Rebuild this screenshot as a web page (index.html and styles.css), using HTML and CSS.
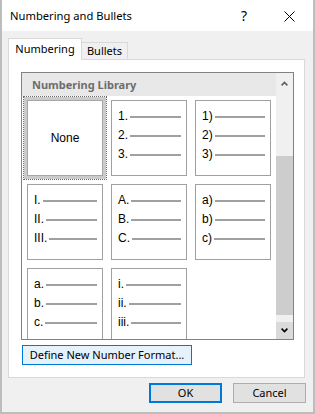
FILE: index.html
```html
<!DOCTYPE html>
<html>
<head>
<meta charset="utf-8">
<link rel="stylesheet" href="styles.css">
</head>
<body>
<div class="window">
  <div class="titlebar">
    <span class="title">Numbering and Bullets</span>
    <span class="help">?</span>
    <span class="close"><svg width="11" height="11" viewBox="0 0 11 11"><path d="M0.5 0.5 L10.5 10.5 M10.5 0.5 L0.5 10.5" stroke="#000" stroke-width="1" fill="none"/></svg></span>
  </div>
  <div class="content">
    <div class="tabs">
      <div class="tab active">Numbering</div>
      <div class="tab">Bullets</div>
    </div>
    <div class="panel">
      <div class="listbox">
        <div class="list-main">
          <div class="lib-header">Numbering Library</div>
          <div class="grid">
            <div class="slot"><div class="cell none selected">None</div></div>
            <div class="slot"><div class="cell">
              <div class="row"><span>1.</span><i></i></div>
              <div class="row"><span>2.</span><i></i></div>
              <div class="row"><span>3.</span><i></i></div>
            </div></div>
            <div class="slot"><div class="cell">
              <div class="row"><span>1)</span><i></i></div>
              <div class="row"><span>2)</span><i></i></div>
              <div class="row"><span>3)</span><i></i></div>
            </div></div>
            <div class="slot"><div class="cell">
              <div class="row"><span>I.</span><i></i></div>
              <div class="row"><span>II.</span><i></i></div>
              <div class="row"><span>III.</span><i></i></div>
            </div></div>
            <div class="slot"><div class="cell">
              <div class="row"><span>A.</span><i></i></div>
              <div class="row"><span>B.</span><i></i></div>
              <div class="row"><span>C.</span><i></i></div>
            </div></div>
            <div class="slot"><div class="cell">
              <div class="row"><span>a)</span><i></i></div>
              <div class="row"><span>b)</span><i></i></div>
              <div class="row"><span>c)</span><i></i></div>
            </div></div>
            <div class="slot"><div class="cell">
              <div class="row"><span>a.</span><i></i></div>
              <div class="row"><span>b.</span><i></i></div>
              <div class="row"><span>c.</span><i></i></div>
            </div></div>
            <div class="slot"><div class="cell">
              <div class="row"><span>i.</span><i></i></div>
              <div class="row"><span>ii.</span><i></i></div>
              <div class="row"><span>iii.</span><i></i></div>
            </div></div>
          </div>
        </div>
        <div class="scrollbar">
          <div class="sb-btn up"><svg width="7" height="5" viewBox="0 0 7 5"><path d="M0.6 4.4 L3.5 1.4 L6.4 4.4" stroke="#606060" stroke-width="1.6" fill="none"/></svg></div>
          <div class="sb-track"><div class="sb-thumb"></div></div>
          <div class="sb-btn down"><svg width="7" height="5" viewBox="0 0 7 5"><path d="M0.6 0.6 L3.5 3.6 L6.4 0.6" stroke="#000" stroke-width="1.6" fill="none"/></svg></div>
        </div>
      </div>
      <button class="btn define">Define New Number Format...</button>
    </div>
    <div class="actions">
      <button class="btn ok">OK</button>
      <button class="btn cancel">Cancel</button>
    </div>
  </div>
</div>
</body>
</html>
```
FILE: styles.css
```css
html, body {
  margin: 0;
  padding: 0;
}
body {
  width: 315px;
  height: 414px;
  overflow: hidden;
  font-family: "Noto Sans", "Liberation Sans", sans-serif;
  font-size: 11px;
  color: #000;
}
.window {
  width: 315px;
  height: 414px;
  box-sizing: border-box;
  border: 2px solid #bdbdbd;
  border-top: none;
  background: #f0f0f0;
  display: flex;
  flex-direction: column;
}
.titlebar {
  height: 31px;
  flex: none;
  background: #fff;
  display: flex;
  align-items: center;
  padding: 0 18px 0 8px;
}
.title {
  flex: 1;
  font-size: 11.2px;
  line-height: 31px;
}
.help {
  width: 16px;
  text-align: center;
  font-size: 14px;
  line-height: 31px;
  margin-right: 32px;
}
.close {
  display: flex;
  width: 11px;
  height: 11px;
  margin-top: 1px;
}
.content {
  flex: 1;
  padding: 7px 8px 0 6px;
  display: flex;
  flex-direction: column;
}
.tabs {
  height: 21px;
  display: flex;
  align-items: flex-end;
  position: relative;
  z-index: 1;
}
.tab {
  box-sizing: border-box;
  text-align: center;
  white-space: nowrap;
}
.tab.active {
  width: 74px;
  height: 22px;
  margin-bottom: -1px;
  background: #fff;
  border: 1px solid #d9d9d9;
  border-bottom: none;
  line-height: 19px;
}
.tab:not(.active) {
  width: 46px;
  height: 17px;
  border-top: 1px solid #d9d9d9;
  border-right: 1px solid #d9d9d9;
  line-height: 16px;
}
.panel {
  height: 319px;
  box-sizing: border-box;
  background: #fff;
  border: 1px solid #d9d9d9;
  padding: 12px 0 12px 12px;
  display: flex;
  flex-direction: column;
  align-items: flex-start;
}
.listbox {
  width: 273px;
  height: 268px;
  box-sizing: border-box;
  border: 1px solid #828282;
  display: flex;
  flex: none;
}
.list-main {
  width: 254px;
  height: 266px;
  overflow: hidden;
}
.lib-header {
  height: 23px;
  background: #e8e8e8;
  color: #6d6d6d;
  font-weight: bold;
  font-size: 11px;
  line-height: 23px;
  padding-left: 10px;
}
.grid {
  display: grid;
  grid-template-columns: repeat(3, 84px);
  grid-auto-rows: 84px;
  padding-left: 1px;
}
.slot {
  padding: 4px;
  box-sizing: border-box;
}
.cell {
  width: 76px;
  height: 76px;
  box-sizing: border-box;
  border: 1px solid #a0a0a0;
  background: #fff;
  padding: 6px 5px 0 5px;
  font-family: "Liberation Sans", Arial, sans-serif;
  font-size: 12px;
}
.cell.selected {
  box-shadow: 0 0 0 3px #cbcbcb;
  outline: 1px dotted #6a6a6a;
  outline-offset: 3px;
  border-color: #a6a6a6;
}
.cell.none {
  padding: 0;
  display: flex;
  align-items: center;
  justify-content: center;
}
.row {
  height: 19px;
  display: flex;
  align-items: center;
}
.row span {
  line-height: 19px;
  padding-left: 1px;
}
.row i {
  flex: 1;
  height: 2px;
  background: #a0a0a0;
  margin-left: 2px;
}
.scrollbar {
  width: 17px;
  height: 266px;
  background: #f0f0f0;
  display: flex;
  flex-direction: column;
}
.sb-btn {
  height: 17px;
  flex: none;
  display: flex;
  align-items: center;
  justify-content: center;
}
.sb-btn.up {
  padding-top: 3px;
  box-sizing: border-box;
}
.sb-btn.down {
  background: #dadada;
}
.sb-track {
  flex: 1;
}
.sb-thumb {
  margin-top: 66px;
  height: 159px;
  background: #cdcdcd;
}
.btn {
  font-family: "Noto Sans", "Liberation Sans", sans-serif;
  font-size: 11px;
  color: #000;
  height: 20px;
  box-sizing: border-box;
  padding: 0;
  margin: 0;
  background: #e1e1e1;
  border: 1px solid #adadad;
  line-height: 16px;
}
.define {
  margin-top: 5px;
  margin-left: 1px;
  width: 170px;
  background: #e5f1fb;
  border-color: #0078d7;
}
.actions {
  margin-top: 5px;
  margin-right: -1px;
  display: flex;
  justify-content: flex-end;
  gap: 11px;
}
.ok, .cancel {
  width: 73px;
}
.ok {
  border: 2px solid #0078d7;
}
```
